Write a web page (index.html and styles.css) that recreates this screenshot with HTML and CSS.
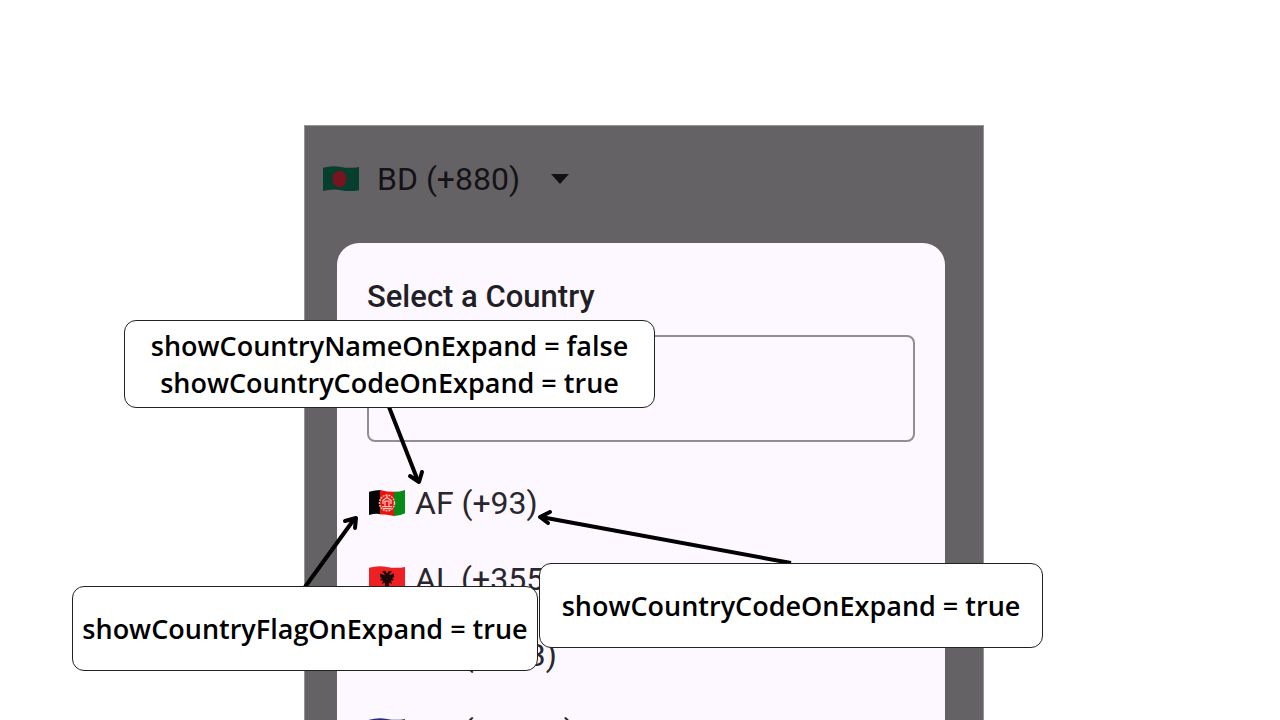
FILE: index.html
```html
<!DOCTYPE html>
<html lang="en">
<head>
<meta charset="utf-8">
<title>Country picker options</title>
<link rel="stylesheet" href="styles.css">
</head>
<body>
<main class="stage">
  <section class="screen">
    <button class="picker" type="button">
      <svg class="flag" viewBox="0 0 36 28" preserveAspectRatio="none" aria-hidden="true">
        <path fill="#073f2e" d="M0 2Q9-1 18 1T36 1V26Q27 28 18 26T0 27Z"/>
        <ellipse cx="16.500" cy="14" rx="7" ry="9" fill="#76151f"/>
      </svg>
      <span class="picker-text">BD (+880)</span>
      <svg class="caret" viewBox="0 0 20 10" aria-hidden="true"><path d="M1 0H19L10 10Z" fill="#111012"/></svg>
    </button>
    <div class="dialog" role="dialog" aria-labelledby="title">
      <h1 class="title" id="title">Select a Country</h1>
      <input class="search" type="text" aria-label="Search country">
      <ul class="countries">
        <li><button class="country" type="button">
          <svg class="flag" viewBox="0 0 36 28" preserveAspectRatio="none" aria-hidden="true">
            <path fill="#050505" d="M0 2Q6 0 12 0V26Q6 25 0 27Z"/>
            <path fill="#e5140c" d="M11 0Q18 2 25 2V28Q18 26 11 26Z"/>
            <path fill="#078b16" d="M25 2Q31 2 36 0V25Q31 28 25 28Z"/>
            <g fill="none" stroke="#ffc4bb"><ellipse cx="18" cy="14" rx="7.500" ry="8.500" stroke-width="1.500" stroke-dasharray="2 1"/><path stroke-width="1.300" d="M13 18H23M14 15V11L18 8L22 11V15M16 17V12H20V17M14 20H22M18 6V9"/></g>
          </svg><span>AF (+93)</span></button></li>
        <li><button class="country" type="button">
          <svg class="flag" viewBox="0 0 36 28" preserveAspectRatio="none" aria-hidden="true">
            <path fill="#ee2023" d="M0 2Q9-1 18 1T36 1V26Q27 28 18 26T0 27Z"/>
            <path fill="#1b0908" d="M18 8L16 5L13 6L15 8L16 10L11 8L11 12L13 13L11 15L14 16L13 19L16 18L16 21L18 24L20 21L20 18L23 19L22 16L25 15L23 13L25 12L25 8L20 10L21 8L23 6L20 5Z"/>
          </svg><span>AL (+355)</span></button></li>
        <li><button class="country" type="button">
          <svg class="flag" viewBox="0 0 36 28" preserveAspectRatio="none" aria-hidden="true">
            <path fill="#08733b" d="M0 2Q9-1 18 1V26Q9 25 0 27Z"/>
            <path fill="#fff" d="M18 1Q27 3 36 1V26Q27 28 18 26Z"/>
            <path fill="#cf2034" d="M22 8A7 7 0 1 0 22 20A6 6 0 1 1 22 8Z"/>
          </svg><span>DZ (+213)</span></button></li>
        <li><button class="country" type="button">
          <svg class="flag" viewBox="0 0 36 28" preserveAspectRatio="none" aria-hidden="true">
            <path fill="#262c83" d="M0 2Q9-1 18 1T36 1V26Q27 28 18 26T0 27Z"/>
            <path fill="#fff" stroke="#cf2034" d="M36 2L8 14L36 25Z"/>
          </svg><span>AS (+1684)</span></button></li>
      </ul>
    </div>
  </section>
  <svg class="arrows" aria-hidden="true" fill="none" stroke="#000" stroke-width="4" stroke-linejoin="round">
    <path d="M389 407L418 481"/><path stroke-linecap="round" d="M410 476L419 482L422 472"/>
    <path d="M305 587L355 518"/><path stroke-linecap="round" d="M345 521L356 518L355 528"/>
    <path d="M791 563L541 517"/><path stroke-linecap="round" d="M550 512L540 517L548 523"/>
  </svg>
  <p class="note note-name">showCountryNameOnExpand = false<br>showCountryCodeOnExpand = true</p>
  <p class="note note-flag">showCountryFlagOnExpand = true</p>
  <p class="note note-code">showCountryCodeOnExpand = true</p>
</main>
</body>
</html>
```
FILE: styles.css
```css
* { box-sizing: border-box; }
body { margin: 0; background: #fff; font-family: Roboto, "Liberation Sans", sans-serif; }
.stage {
  position: relative;
  display: flex;
  height: 100vh;
  padding: 125px 296px 0 304px;
  overflow: hidden;
}
.screen {
  flex: 1;
  align-self: flex-start;
  min-height: 100%;
  padding: 0 38px 0 32px;
  background: #656265;
  border: 1px solid #969496;
  border-width: 1px 1px 0;
}
button { border: 0; padding: 0; background: none; font: inherit; color: inherit; }
.picker {
  display: flex;
  align-items: center;
  height: 105px;
  margin-left: -14px;
  color: #151316;
  font-size: 32px;
}
.flag { flex: none; width: 36px; height: 26px; }
.picker-text { margin: 0 30px 0 18px; }
.caret { width: 20px; height: 10px; }
.dialog {
  margin-top: 12px;
  padding: 36px 30px 0;
  background: #fdf7ff;
  border-radius: 22px 22px 0 0;
  color: #29262d;
}
.title {
  margin: 0 0 20px;
  font-size: 31px;
  line-height: 36px;
  font-weight: 500;
  color: #211e25;
}
.search {
  display: block;
  width: 100%;
  height: 107px;
  padding: 0 24px;
  border: 2px solid #928d94;
  border-radius: 8px;
  background: transparent;
  font: inherit;
  font-size: 30px;
}
.countries { margin: 23px 0 0; padding: 0; list-style: none; }
.country {
  display: flex;
  align-items: center;
  gap: 10px;
  width: 100%;
  height: 76px;
  padding-left: 2px;
  font-size: 32px;
}
.arrows { position: absolute; top: 0; left: 0; width: 100%; height: 100%; }
.note {
  position: absolute;
  display: flex;
  flex-direction: column;
  justify-content: center;
  margin: 0;
  background: #fff;
  border: 1px solid #222;
  border-radius: 12px;
  color: #000;
  font-family: "Open Sans", "Noto Sans", sans-serif;
  font-size: 27px;
  font-weight: 600;
  line-height: 37px;
  text-align: center;
  white-space: nowrap;
}
.note-name { display: block; left: 124px; top: 320px; width: 531px; padding: 6px 0; height: 88px; }
.note-flag { left: 72px; top: 586px; width: 466px; height: 85px; }
.note-code { left: 539px; top: 563px; width: 504px; height: 85px; }
```
